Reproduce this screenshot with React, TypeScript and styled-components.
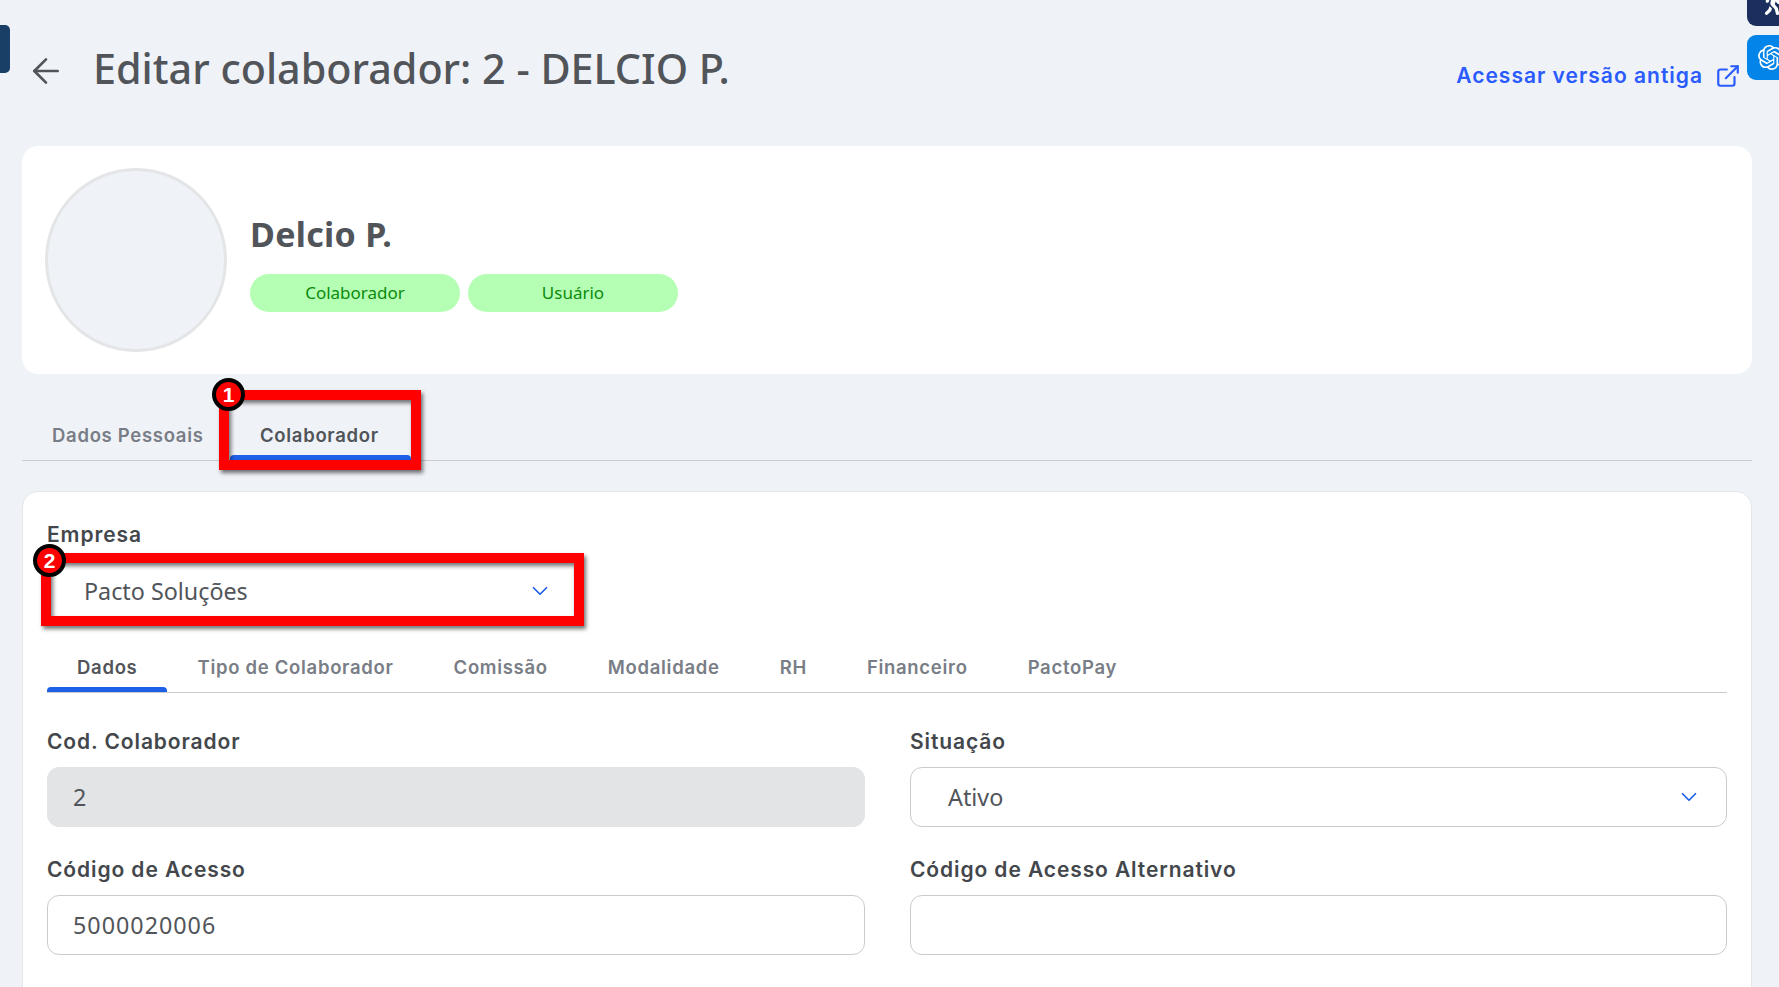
import React from 'react';
import styled, { createGlobalStyle } from 'styled-components';
import { ArrowLeft, ChevronDown, ExternalLink } from 'lucide-react';
import { SiOpenai } from 'react-icons/si';
import { FaPersonWalking } from 'react-icons/fa6';

const Global = createGlobalStyle`
  html, body { margin: 0; padding: 0; background: #eff2f7; overflow: hidden; }
  * { box-sizing: border-box; }
`;

const heading = `"Noto Sans", "Open Sans", sans-serif`;
const ui = `Inter, "Noto Sans", sans-serif`;

const Page = styled.div`
  position: relative;
  width: 1779px;
  height: 987px;
  overflow: hidden;
  padding: 0 27px 0 22px;
  background: #eff2f7;
`;
const Header = styled.header`
  height: 146px;
  display: flex;
  align-items: flex-start;
  justify-content: space-between;
  padding: 42px 11px 0 4px;
`;
const TitleRow = styled.div`
  display: flex;
  align-items: center;
  gap: 27px;
  color: #51555a;
`;
const BackArrow = styled(ArrowLeft)`
  margin-top: 6px;
`;
const Title = styled.h1`
  margin: 0;
  font: 500 41.3px/52px ${heading};
  color: #51555a;
`;
const OldLink = styled.a`
  display: flex;
  align-items: center;
  gap: 12px;
  margin-top: 20px;
  font: 600 21px/28px ${ui};
  letter-spacing: 1px;
  color: #2a5bfe;
`;
const SideTab = styled.div<{ $top: number; $height: number; $bg: string; $inset: number; $bottom: number }>`
  position: absolute;
  right: 0;
  top: ${p => p.$top}px;
  width: 32px;
  height: ${p => p.$height}px;
  background: ${p => p.$bg};
  border-radius: 9px 0 0 9px;
  color: #fff;
  display: flex;
  align-items: flex-end;
  overflow: hidden;
  padding: 0 0 ${p => p.$bottom}px ${p => p.$inset}px;
  & > svg { flex: none; }
`;
const LeftTab = styled.div`
  position: absolute;
  left: 0;
  top: 25px;
  width: 10px;
  height: 48px;
  background: #1a3f66;
  border-radius: 0 5px 5px 0;
`;
const ProfileCard = styled.section`
  height: 228px;
  background: #fff;
  border-radius: 16px;
  padding: 22px 23px;
  display: flex;
  align-items: center;
  gap: 23px;
`;
const Avatar = styled.div`
  width: 182px;
  height: 184px;
  border-radius: 50%;
  background: #eff2f7;
  border: 3px solid #e4e5e7;
`;
const ProfileInfo = styled.div`
  display: flex;
  flex-direction: column;
  gap: 20px;
  margin-top: 6px;
`;
const Name = styled.h2`
  margin: 0;
  font: 700 34px/40px ${heading};
  letter-spacing: 0.3px;
  color: #51555a;
`;
const Badges = styled.div`
  display: flex;
  gap: 8px;
`;
const Badge = styled.span`
  width: 210px;
  height: 38px;
  border-radius: 19px;
  background: #b4ffb4;
  color: #0c8a0c;
  font: 400 17px/38px ${heading};
  text-align: center;
`;
const MainTabs = styled.nav`
  display: flex;
  height: 87px;
  align-items: flex-end;
  border-bottom: 1px solid #c9cbcf;
`;
const TabItem = styled.div<{ $active?: boolean; $width?: number }>`
  position: relative;
  height: 46px;
  ${p => (p.$width ? `width: ${p.$width}px;` : '')}
  padding: 0 30px 4px;
  display: flex;
  align-items: center;
  white-space: nowrap;
  font: 600 18.5px/24px ${ui};
  letter-spacing: 0.7px;
  color: ${p => (p.$active ? '#51555a' : '#797d86')};
  ${p => p.$active && `&::after {
    content: '';
    position: absolute;
    left: 0; right: 0; bottom: 0;
    height: 5px;
    border-radius: 4px 4px 0 0;
    background: #1e5fe8;
  }`}
`;
const FormCard = styled.section`
  margin-top: 30px;
  height: 600px;
  background: #fff;
  border: 1px solid #e4e6ea;
  border-radius: 16px;
  padding: 30px 24px 0 24px;
`;
const Label = styled.label`
  display: block;
  font: 600 21px/26px ${ui};
  letter-spacing: 0.9px;
  color: #43474b;
  height: 26px;
`;
const Highlight = styled.div`
  position: relative;
  margin-top: 13px;
  width: 531px;
`;
const Annotation = styled.div<{ $inset: string }>`
  position: absolute;
  inset: ${p => p.$inset};
  border: 10px solid #ff0000;
  box-shadow: 2px 3px 4px rgba(0, 0, 0, 0.55), inset 2px 3px 4px rgba(0, 0, 0, 0.55);
  pointer-events: none;
  z-index: 2;
`;
const Marker = styled.div<{ $left: number; $top: number }>`
  position: absolute;
  left: ${p => p.$left}px;
  top: ${p => p.$top}px;
  width: 33px;
  height: 33px;
  border-radius: 50%;
  background: #f00;
  border: 4px solid #000;
  color: #fff;
  font: 700 21px/25px "Liberation Sans", sans-serif;
  letter-spacing: 0;
  text-align: center;
  z-index: 3;
`;
const FieldBox = styled.div<{ $disabled?: boolean; $bare?: boolean; $pad?: number; $tracking?: number }>`
  height: 60px;
  border-radius: 12px;
  border: 1px solid ${p => (p.$disabled ? '#e3e4e6' : p.$bare ? 'transparent' : '#c9cbcf')};
  background: ${p => (p.$disabled ? '#e3e4e6' : '#fff')};
  display: flex;
  align-items: center;
  justify-content: space-between;
  padding: 0 24px 0 ${p => p.$pad ?? 25}px;
  font: 400 23.3px/32px ${heading};
  letter-spacing: ${p => p.$tracking ?? 0}px;
  color: #51555a;
`;
const SubTabs = styled.nav`
  display: flex;
  margin-top: 25px;
  border-bottom: 1px solid #c9cbcf;
`;
const FieldGrid = styled.div`
  display: grid;
  grid-template-columns: 818px 817px;
  column-gap: 45px;
  row-gap: 30px;
  margin-top: 36px;
`;
const Field = styled.div`
  display: flex;
  flex-direction: column;
  gap: 12px;
`;

const subTabs = ['Dados', 'Tipo de Colaborador', 'Comissão', 'Modalidade', 'RH', 'Financeiro', 'PactoPay'];
const Chevron = () => <ChevronDown size={26} color="#1e5fe8" strokeWidth={1.6} />;

export default function App() {
  return (
    <Page>
      <Global />
      <LeftTab />
      <SideTab $top={-20} $height={46} $bg="#1c2e5e" $inset={13} $bottom={11}><FaPersonWalking size={26} /></SideTab>
      <SideTab $top={35} $height={45} $bg="#0384e8" $inset={11} $bottom={10}><SiOpenai size={25} /></SideTab>
      <Header>
        <TitleRow>
          <BackArrow size={40} strokeWidth={1.6} />
          <Title>Editar colaborador: 2 - DELCIO P.</Title>
        </TitleRow>
        <OldLink>
          Acessar versão antiga
          <ExternalLink size={26} strokeWidth={2} />
        </OldLink>
      </Header>
      <ProfileCard>
        <Avatar />
        <ProfileInfo>
          <Name>Delcio P.</Name>
          <Badges>
            <Badge>Colaborador</Badge>
            <Badge>Usuário</Badge>
          </Badges>
        </ProfileInfo>
      </ProfileCard>
      <MainTabs>
        <TabItem $width={208}>Dados Pessoais</TabItem>
        <TabItem $active $width={181}>
          Colaborador
          <Annotation $inset="-24px -10px -10px -11px" />
          <Marker $left={-18} $top={-36}>1</Marker>
        </TabItem>
      </MainTabs>
      <FormCard>
        <Label>Empresa</Label>
        <Highlight>
          <FieldBox $bare $pad={36}>
            Pacto Soluções
            <Chevron />
          </FieldBox>
          <Annotation $inset="-8px -6px -5px -6px" />
          <Marker $left={-14} $top={-17}>2</Marker>
        </Highlight>
        <SubTabs>
          {subTabs.map((t, i) => <TabItem key={t} $active={i === 0}>{t}</TabItem>)}
        </SubTabs>
        <FieldGrid>
          <Field><Label>Cod. Colaborador</Label><FieldBox $disabled>2</FieldBox></Field>
          <Field><Label>Situação</Label><FieldBox $pad={37}>Ativo<Chevron /></FieldBox></Field>
          <Field><Label>Código de Acesso</Label><FieldBox $tracking={1}>5000020006</FieldBox></Field>
          <Field><Label>Código de Acesso Alternativo</Label><FieldBox /></Field>
        </FieldGrid>
      </FormCard>
    </Page>
  );
}
